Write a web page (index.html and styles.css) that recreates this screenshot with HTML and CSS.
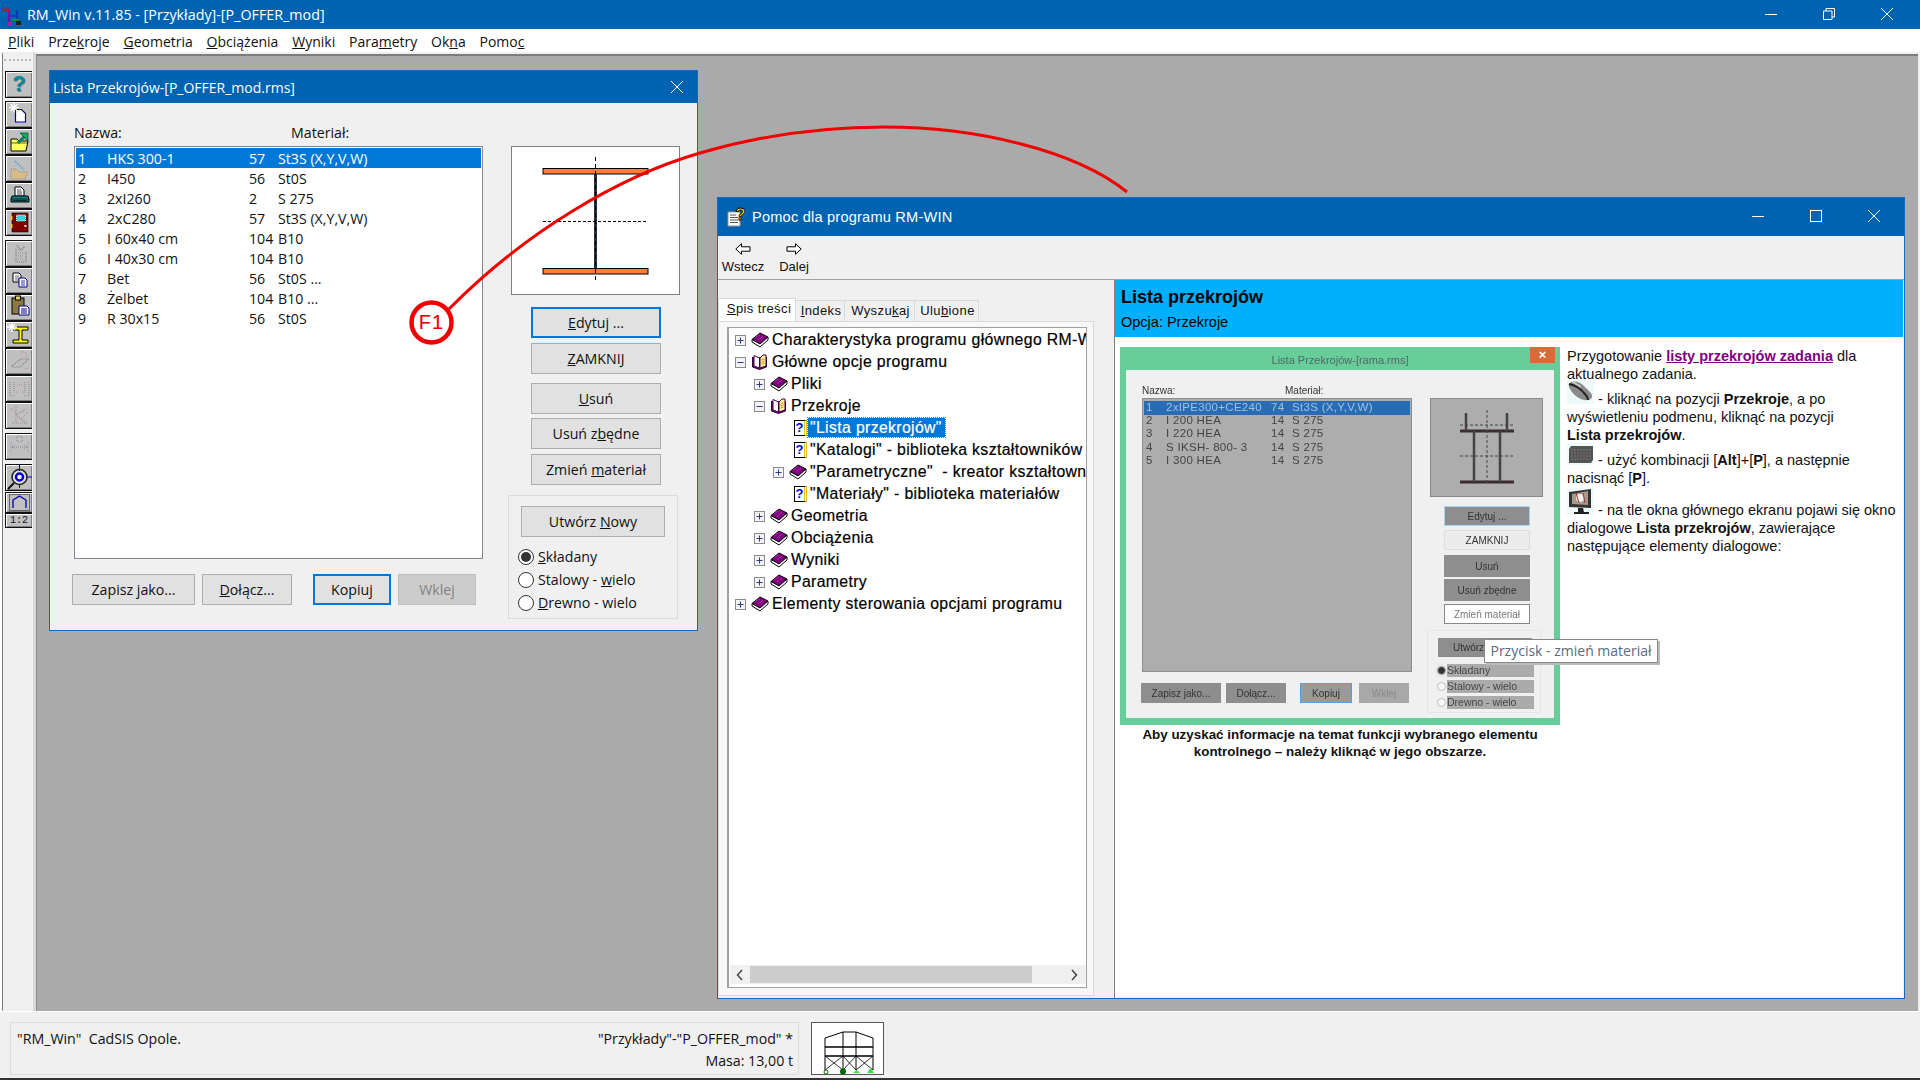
FILE: index.html
```html
<!DOCTYPE html>
<html lang="pl">
<head>
<meta charset="utf-8">
<title>RM_Win</title>
<link rel="stylesheet" href="styles.css">
</head>
<body>
<svg class="sprite" width="0" height="0">
  <symbol id="book" viewBox="0 0 18 16"><path d="M1 7.5 9 1l8 4-8 7z" fill="#800080" stroke="#000" stroke-linejoin="round"/><path d="M1 7.5V10l8 5 8-7V5l-8 7z" fill="#fff" stroke="#000" stroke-linejoin="round"/><path d="M4 6 9 2.5M7 8l5-4" stroke="#b040b0" stroke-width=".8"/></symbol>
  <symbol id="open" viewBox="0 0 18 16"><path d="M1.5 3v10l7 2.5 7-2.5V3" fill="#800080" stroke="#300030"/><path d="M3 1.5 8.5 4v10L3 12z" fill="#fff" stroke="#400040"/><path d="M15 1h-3L9 4v10l6-2z" fill="#fff3a0" stroke="#400040"/><path d="M10.500 6l3-1M10.500 8l3-1M10.500 10l3-1" stroke="#b08000" stroke-width=".8"/></symbol>
  <symbol id="plus" viewBox="0 0 11 11"><rect x=".5" y=".5" width="10" height="10" fill="#f3f3f6" stroke="#8c8c8c"/><path d="M2.500 5.500h6M5.500 2.500v6" stroke="#2a3a8c"/></symbol>
  <symbol id="minus" viewBox="0 0 11 11"><rect x=".5" y=".5" width="10" height="10" fill="#f3f3f6" stroke="#8c8c8c"/><path d="M2.500 5.500h6" stroke="#2a3a8c"/></symbol>
</svg>

<header class="titlebar">
  <svg class="app-icon" viewBox="0 0 22 20" width="22" height="20"><path d="M3 3 8 5M8 5 6 1M8 5 1 3" stroke="#d01010" stroke-width="1.500" fill="none"/><path d="M8 5v12" stroke="#8000a0" stroke-width="2"/><path d="M16 4v13M8 10h9" stroke="#1030c0" stroke-width="1.500"/><path d="M11 14h7" stroke="#109030" stroke-width="2"/><rect x="15" y="15" width="5" height="4" fill="#202020"/><rect x="7" y="16" width="3" height="3" fill="#d010a0"/></svg>
  <span class="title-text">RM_Win v.11.85 - [Przykłady]-[P_OFFER_mod]</span>
  <div class="win-controls main-controls">
    <svg viewBox="0 0 12 12" width="12" height="12"><path d="M0 6.500h12" stroke="#fff"/></svg>
    <svg viewBox="0 0 12 12" width="12" height="12"><path d="M.5 3h8.500v8.500H.5zM3 3V.5h8.500V9H9" fill="none" stroke="#fff"/></svg>
    <svg viewBox="0 0 12 12" width="12" height="12"><path d="M0 0l12 12M12 0 0 12" stroke="#fff"/></svg>
  </div>
</header>

<nav class="menubar">
  <span><u>P</u>liki</span><span>Prze<u>k</u>roje</span><span><u>G</u>eometria</span><span><u>O</u>bciążenia</span><span><u>W</u>yniki</span><span>Para<u>m</u>etry</span><span>Ok<u>n</u>a</span><span>Pomo<u>c</u></span>
</nav>

<main class="workspace">
  <aside class="toolbar">
    <div class="tb-grip"></div>
    <div class="tb-group tb-first">
      <div class="tb-btn tb-help">?</div>
    </div>
    <div class="tb-group">
      <div class="tb-btn"><svg viewBox="0 0 27 27" width="27" height="27"><path d="M9.500 8.500h6l4 4v8.500h-10z" fill="#fff" stroke="#0000a0" stroke-width="1.200"/><path d="M8 1.500v10M3 6.500h10M4.500 3l7 7M11.500 3l-7 7" stroke="#fff" stroke-width="1.300"/></svg></div>
      <div class="tb-btn"><svg viewBox="0 0 27 27" width="27" height="27"><path d="M5 11h6l2 2h9l-2 10H5z" fill="#ffff60" stroke="#000"/><path d="M5 15h17" stroke="#000" stroke-width=".6"/><path d="M12 15l7-7" stroke="#008060" stroke-width="3"/><path d="M14 5h8v8z" fill="#10b060" stroke="#004030" stroke-width=".7"/></svg></div>
      <div class="tb-btn"><svg viewBox="0 0 27 27" width="27" height="27"><path d="M5 14h5l3 3h9l-3 7H5z" fill="#d8bc88" stroke="#888" stroke-dasharray="1 1"/><path d="M9 6l9 9" stroke="#70a8c8" stroke-width="2" stroke-dasharray="2 1"/></svg></div>
      <div class="tb-btn"><svg viewBox="0 0 27 27" width="27" height="27"><path d="M9 5h6l3 3v6H9z" fill="#fff" stroke="#000"/><path d="M11 8h4M11 10h5M11 12h5" stroke="#000" stroke-width=".7"/><path d="M6 14h16l1 3v3H5v-3z" fill="#108080" stroke="#000"/><path d="M5 17h18M7 18.500h14" stroke="#000" stroke-width=".7"/></svg></div>
      <div class="tb-btn"><svg viewBox="0 0 27 27" width="27" height="27"><rect x="6" y="4" width="16" height="19" fill="#800000" stroke="#000" stroke-width=".6"/><rect x="10.500" y="6" width="9" height="6" fill="#40d0e0" stroke="#e0ffff" stroke-dasharray="1 1"/><rect x="4.500" y="7" width="2" height="4" fill="#e8c820"/><rect x="4.500" y="15" width="2" height="4" fill="#e8c820"/><rect x="18.500" y="16" width="2" height="2" fill="#eee"/></svg></div>
    </div>
    <div class="tb-group">
      <div class="tb-btn"><svg viewBox="0 0 27 27" width="27" height="27"><path d="M11 5l3 5 5-3M10 9v13h10V11" fill="none" stroke="#777" stroke-dasharray="1 1" stroke-width="1.200"/><path d="M12 13h6M12 16h6M12 19h6" stroke="#888" stroke-dasharray="1 1"/><path d="M18 6l-3 5" stroke="#c08080" stroke-dasharray="1 1"/></svg></div>
      <div class="tb-btn"><svg viewBox="0 0 27 27" width="27" height="27"><path d="M7 6h6l2 2v7H7z" fill="#fff" stroke="#000"/><path d="M9 9h4M9 11h4M9 13h4" stroke="#000" stroke-width=".6"/><path d="M13 11h6l2 2v7h-8z" fill="#fff" stroke="#000080"/><path d="M15 14h4M15 16h4M15 18h4" stroke="#000080" stroke-width=".8"/></svg></div>
      <div class="tb-btn"><svg viewBox="0 0 27 27" width="27" height="27"><rect x="6" y="4" width="12" height="16" fill="#8a7a40" stroke="#000"/><rect x="9.500" y="2" width="5" height="4" fill="#e8d060" stroke="#000"/><path d="M13 12h8l2 2v7H13z" fill="#fff" stroke="#000080"/><path d="M15 15h6M15 17h6M15 19h6" stroke="#000080"/></svg></div>
      <div class="tb-btn"><svg viewBox="0 0 27 27" width="27" height="27"><path d="M7 6h15v3h-6v10h6v3H7v-3h6V9H7z" fill="#ffff00" stroke="#000"/><path d="M6 1v10M1 6h10M3 3l6 6M9 3 3 9" stroke="#fff" stroke-width="1.300"/></svg></div>
      <div class="tb-btn"><svg viewBox="0 0 27 27" width="27" height="27"><path d="M6 18l9-7h8l-9 8H6z" fill="none" stroke="#808080" stroke-dasharray="1 1" stroke-width="1.200"/><path d="M15 4h3M20 8l1 1M22 20l-3 1M19 4l2 3" stroke="#c08080" stroke-dasharray="1 1"/></svg></div>
      <div class="tb-btn"><svg viewBox="0 0 27 27" width="27" height="27"><path d="M4 7v14h6M23 7v14h-6M8 7v10h3M19 7v10h-3" fill="none" stroke="#909090" stroke-dasharray="1 1" stroke-width="1.200"/><path d="M11 10h5" stroke="#c08888" stroke-dasharray="1 1"/></svg></div>
      <div class="tb-btn"><svg viewBox="0 0 27 27" width="27" height="27"><path d="M10 5v16h11M6 21h5M10 13l10-6M10 13l10 8" fill="none" stroke="#909090" stroke-dasharray="1 1" stroke-width="1.200"/><path d="M5 6l5 5M14 18l8-8" stroke="#c08080" stroke-dasharray="1 1"/></svg></div>
    </div>
    <div class="tb-group">
      <div class="tb-btn"><svg viewBox="0 0 27 27" width="27" height="27"><path d="M5 8v12M22 8v12" stroke="#9090c0" stroke-dasharray="1 1"/><path d="M6 14h15M6 14l3-2M6 14l3 2M21 14l-3-2M21 14l-3 2" stroke="#888" stroke-dasharray="1 1" fill="none"/><path d="M10 5l3-2M17 5l-3-2M10 7l3 2M17 7l-3 2" stroke="#888" fill="none" stroke-width=".8"/></svg></div>
    </div>
    <div class="tb-group">
      <div class="tb-btn"><svg viewBox="0 0 27 27" width="27" height="27"><circle cx="13.500" cy="13" r="7.500" fill="#e0e0e0" stroke="#222" stroke-width="1.600"/><circle cx="13.500" cy="13" r="3.500" fill="#fff" stroke="#0000e0" stroke-width="2.500"/><path d="M13.500 1v6M13.500 20v4M21 13h5" stroke="#0000c0"/><path d="M8 19l-6 6" stroke="#111" stroke-width="2"/></svg></div>
    </div>
    <div class="tb-group tb-tight">
      <div class="tb-btn tb-mid"><svg viewBox="0 0 27 20" width="27" height="20"><rect x="3.500" y="1.500" width="20" height="16" fill="none" stroke="#666"/><path d="M7 15V7l6.500-4L20 7v8" fill="none" stroke="#0000a0" stroke-width="1.300"/></svg></div>
      <div class="tb-btn tb-small">1:2</div>
    </div>
  </aside>

  <div class="desk"></div>

  <section class="window dialog">
    <div class="win-title"><span>Lista Przekrojów-[P_OFFER_mod.rms]</span>
      <svg class="dlg-close" viewBox="0 0 12 12" width="12" height="12"><path d="M0 0l12 12M12 0 0 12" stroke="#fff"/></svg>
    </div>
    <div class="dlg-body">
      <div class="dlg-left">
        <div class="dlg-labels"><span>Nazwa:</span><span>Materiał:</span></div>
        <div class="listbox">
          <div class="row sel"><span>1</span><span>HKS 300-1</span><span>57</span><span>St3S (X,Y,V,W)</span></div>
          <div class="row"><span>2</span><span>I450</span><span>56</span><span>St0S</span></div>
          <div class="row"><span>3</span><span>2xI260</span><span>2</span><span>S 275</span></div>
          <div class="row"><span>4</span><span>2xC280</span><span>57</span><span>St3S (X,Y,V,W)</span></div>
          <div class="row"><span>5</span><span>I 60x40 cm</span><span>104</span><span>B10</span></div>
          <div class="row"><span>6</span><span>I 40x30 cm</span><span>104</span><span>B10</span></div>
          <div class="row"><span>7</span><span>Bet</span><span>56</span><span>St0S ...</span></div>
          <div class="row"><span>8</span><span>Żelbet</span><span>104</span><span>B10 ...</span></div>
          <div class="row"><span>9</span><span>R 30x15</span><span>56</span><span>St0S</span></div>
        </div>
        <div class="dlg-bottom">
          <div class="btn b-save"><span>Zapisz <u>j</u>ako...</span></div>
          <div class="btn b-join"><span><u>D</u>ołącz...</span></div>
          <div class="btn btn-def b-copy">Kopiuj</div>
          <div class="btn btn-dis b-paste">Wklej</div>
        </div>
      </div>
      <div class="dlg-right">
        <svg class="preview" viewBox="0 0 169 149" width="169" height="149">
          <rect x=".5" y=".5" width="168" height="148" fill="#fff" stroke="#808080"/>
          <rect x="32" y="22.500" width="105" height="5.500" fill="#ff7d3c" stroke="#000"/>
          <rect x="32" y="122.500" width="105" height="5.500" fill="#ff7d3c" stroke="#000"/>
          <rect x="83" y="28" width="3" height="94" fill="#26303c"/>
          <path d="M84.500 11v123" stroke="#000" stroke-dasharray="4 3"/>
          <path d="M32 75.500h105" stroke="#000" stroke-dasharray="3 2"/>
        </svg>
        <div class="btn-stack">
          <div class="btn btn-def"><span><u>E</u>dytuj ...</span></div>
          <div class="btn"><span><u>Z</u>AMKNIJ</span></div>
          <div class="btn gap-big"><span><u>U</u>suń</span></div>
          <div class="btn gap-less"><span>Usuń z<u>b</u>ędne</span></div>
          <div class="btn"><span>Zmień <u>m</u>ateriał</span></div>
        </div>
        <div class="group">
          <div class="btn b-new"><span>Utwórz <u>N</u>owy</span></div>
          <div class="radio on"><i></i><span><u>S</u>kładany</span></div>
          <div class="radio"><i></i><span>Stalowy - <u>w</u>ielo</span></div>
          <div class="radio"><i></i><span><u>D</u>rewno - wielo</span></div>
        </div>
      </div>
    </div>
  </section>

  <section class="window help">
    <div class="win-title help-title">
      <svg class="help-icon" viewBox="0 0 20 20" width="20" height="20"><path d="M1 5h12v14H1z" fill="#fff" stroke="#999"/><path d="M3 8h6M3 10.500h8M3 13h8M3 15.500h8" stroke="#555"/><text x="13.500" y="13" text-anchor="middle" class="help-q">?</text></svg>
      <span>Pomoc dla programu RM-WIN</span>
      <div class="win-controls help-controls">
        <svg viewBox="0 0 12 12" width="12" height="12"><path d="M0 6.500h12" stroke="#fff"/></svg>
        <svg viewBox="0 0 12 12" width="12" height="12"><rect x=".5" y=".5" width="11" height="11" fill="none" stroke="#fff"/></svg>
        <svg viewBox="0 0 12 12" width="12" height="12"><path d="M0 0l12 12M12 0 0 12" stroke="#fff"/></svg>
      </div>
    </div>
    <div class="help-tools">
      <div class="tool t-back"><svg viewBox="0 0 16 12" width="16" height="12"><path d="M.8 6 6.500.8v3h8.500v4.400H6.500v3z" fill="#fff" stroke="#000"/></svg><span>Wstecz</span></div>
      <div class="tool t-next"><svg viewBox="0 0 16 12" width="16" height="12"><path d="M15.200 6 9.500.8v3H1v4.400h8.500v3z" fill="#fff" stroke="#000"/></svg><span>Dalej</span></div>
    </div>
    <div class="help-body">
      <div class="nav">
        <div class="tabs">
          <div class="tab active"><span><u>S</u>pis treści</span></div>
          <div class="tab t2"><span><u>I</u>ndeks</span></div>
          <div class="tab t3"><span>Wyszu<u>k</u>aj</span></div>
          <div class="tab t4"><span>Ulu<u>b</u>ione</span></div>
        </div>
        <div class="tab-panel">
          <div class="tree">
            <div class="tree-rows">
              <div class="node"><svg class="tg"><use href="#plus"/></svg><svg class="bk"><use href="#book"/></svg><span>Charakterystyka programu głównego RM-WIN</span></div>
              <div class="node"><svg class="tg"><use href="#minus"/></svg><svg class="bk"><use href="#open"/></svg><span>Główne opcje programu</span></div>
              <div class="node l1"><svg class="tg"><use href="#plus"/></svg><svg class="bk"><use href="#book"/></svg><span>Pliki</span></div>
              <div class="node l1"><svg class="tg"><use href="#minus"/></svg><svg class="bk"><use href="#open"/></svg><span>Przekroje</span></div>
              <div class="node l2 doc"><i class="hp">?</i><span class="cur">"Lista przekrojów"</span></div>
              <div class="node l2 doc"><i class="hp">?</i><span>"Katalogi" - biblioteka kształtowników</span></div>
              <div class="node l2"><svg class="tg"><use href="#plus"/></svg><svg class="bk"><use href="#book"/></svg><span>"Parametryczne"  - kreator kształtowników</span></div>
              <div class="node l2 doc"><i class="hp">?</i><span>"Materiały" - biblioteka materiałów</span></div>
              <div class="node l1"><svg class="tg"><use href="#plus"/></svg><svg class="bk"><use href="#book"/></svg><span>Geometria</span></div>
              <div class="node l1"><svg class="tg"><use href="#plus"/></svg><svg class="bk"><use href="#book"/></svg><span>Obciążenia</span></div>
              <div class="node l1"><svg class="tg"><use href="#plus"/></svg><svg class="bk"><use href="#book"/></svg><span>Wyniki</span></div>
              <div class="node l1"><svg class="tg"><use href="#plus"/></svg><svg class="bk"><use href="#book"/></svg><span>Parametry</span></div>
              <div class="node"><svg class="tg"><use href="#plus"/></svg><svg class="bk"><use href="#book"/></svg><span>Elementy sterowania opcjami programu</span></div>
            </div>
            <div class="hscroll">
              <svg viewBox="0 0 8 12" width="8" height="12"><path d="M6 1 1.500 6 6 11" fill="none" stroke="#444" stroke-width="1.500"/></svg>
              <div class="thumb"></div>
              <svg viewBox="0 0 8 12" width="8" height="12"><path d="M2 1l4.500 5L2 11" fill="none" stroke="#444" stroke-width="1.500"/></svg>
            </div>
          </div>
        </div>
      </div>
      <div class="splitter"></div>
      <article class="topic">
        <div class="topic-head">
          <h1>Lista przekrojów</h1>
          <p>Opcja: Przekroje</p>
        </div>
        <div class="topic-body">
          <figure class="fig">
            <div class="shot">
              <div class="shot-title"><span class="soft">Lista Przekrojów-[rama.rms]</span><span class="shot-x">×</span></div>
              <div class="shot-in">
                <div class="s-left">
                  <div class="s-labels"><span>Nazwa:</span><span>Materiał:</span></div>
                  <div class="s-list">
                    <div class="s-row s-sel"><span>1</span><span>2xIPE300+CE240</span><span>74</span><span>St3S (X,Y,V,W)</span></div>
                    <div class="s-row"><span>2</span><span>I 200 HEA</span><span>14</span><span>S 275</span></div>
                    <div class="s-row"><span>3</span><span>I 220 HEA</span><span>14</span><span>S 275</span></div>
                    <div class="s-row"><span>4</span><span>S IKSH- 800- 3</span><span>14</span><span>S 275</span></div>
                    <div class="s-row"><span>5</span><span>I 300 HEA</span><span>14</span><span>S 275</span></div>
                  </div>
                  <div class="s-bottom">
                    <div class="s-btn s1">Zapisz jako...</div>
                    <div class="s-btn s2">Dołącz...</div>
                    <div class="s-btn s3">Kopiuj</div>
                    <div class="s-btn s4">Wklej</div>
                  </div>
                </div>
                <div class="s-right">
                  <svg class="s-prev" viewBox="0 0 113 99" width="113" height="99">
                    <rect width="113" height="99" fill="#adadad"/>
                    <rect x=".5" y=".5" width="112" height="98" fill="none" stroke="#8a8a8a"/>
                    <path d="M30 33h54M30 84h54" stroke="#3c2b30" stroke-width="3"/>
                    <path d="M44 33v51M70 33v51M36 15v18M77 15v18" stroke="#444" stroke-width="2.500"/>
                    <path d="M30 58h54M57 12v74M30 27h54" stroke="#444" stroke-dasharray="3 2"/>
                  </svg>
                  <div class="s-stack">
                    <div class="s-btn sb1">Edytuj ...</div>
                    <div class="s-btn sb2">ZAMKNIJ</div>
                    <div class="s-btn sb3">Usuń</div>
                    <div class="s-btn sb4">Usuń zbędne</div>
                    <div class="s-btn sb5">Zmień materiał</div>
                  </div>
                  <div class="s-group">
                    <div class="s-btn sb6">Utwórz Nowy</div>
                    <div class="s-radio s-on"><i></i><span>Składany</span></div>
                    <div class="s-radio"><i></i><span>Stalowy - wielo</span></div>
                    <div class="s-radio"><i></i><span>Drewno - wielo</span></div>
                  </div>
                </div>
              </div>
              <div class="tooltip">Przycisk - zmień materiał</div>
            </div>
            <figcaption>Aby uzyskać informacje na temat funkcji wybranego elementu<br>kontrolnego – należy kliknąć w jego obszarze.</figcaption>
          </figure>
          <div class="topic-text">
            <p>Przygotowanie <a>listy przekrojów zadania</a> dla<br>aktualnego zadania.</p>
            <p class="p2"><svg class="pic" viewBox="0 0 27 24" width="27" height="24"><rect width="27" height="24" fill="#eefafa"/><path d="M2 4c4-4 10-3 16 3l6 6c2 3 1 7-3 7-6 1-12-3-16-8C3 9 1 6 2 4z" fill="#8a8a8a"/><path d="M2 4c5 1 11 4 15 9 2 2 4 5 4 7" stroke="#222" stroke-width="2" fill="none"/><path d="M6 2l8 5" stroke="#ccc" stroke-width="1.500"/></svg> - kliknąć na pozycji <b>Przekroje</b>, a po<br>wyświetleniu podmenu, kliknąć na pozycji<br><b>Lista przekrojów</b>.</p>
            <p class="p3"><svg class="pic" viewBox="0 0 27 22" width="27" height="22"><rect width="27" height="22" fill="#eefafa"/><path d="M2 6 4 3h22v14l-2 3H2z" fill="#555"/><path d="M4 7h20M4 10h20M4 13h20M4 16h20" stroke="#777" stroke-dasharray="2 1"/></svg> - użyć kombinacji [<b>Alt</b>]+[<b>P</b>], a następnie<br>nacisnąć [<b>P</b>].</p>
            <p class="p4"><svg class="pic" viewBox="0 0 27 27" width="27" height="27"><rect width="27" height="27" fill="#eefafa"/><path d="M2 4l22-3v19l-22-1z" fill="#333"/><path d="M5 6l16-3v14l-16-1z" fill="#a89a88"/><circle cx="13" cy="10" r="4" fill="#eee"/><path d="M9 5l3 10M16 5l2 10" stroke="#a03030"/><path d="M11 20h5l1 4h5v2H7v-2h4z" fill="#222"/></svg> - na tle okna głównego ekranu pojawi się okno<br>dialogowe <b>Lista przekrojów</b>, zawierające<br>następujące elementy dialogowe:</p>
          </div>
        </div>
      </article>
    </div>
  </section>
</main>

<footer class="statusbar">
  <div class="status-panel">
    <span>"RM_Win"  CadSIS Opole.</span>
    <div class="status-right"><span>"Przykłady"-"P_OFFER_mod" *</span><span>Masa: 13,00 t</span></div>
  </div>
  <div class="thumb-box">
    <svg viewBox="0 0 72 54" width="72" height="54">
      <path d="M13 47V15L31 9h13l17 6v32M31 9v38M44 9v38" fill="none" stroke="#000" stroke-width="1"/>
      <path d="M13 24h48M13 33h48" stroke="#000" stroke-width="1.500"/>
      <path d="M13 33l18 14M31 33 13 47M31 33l13 14M44 33 31 47M44 33l17 14M61 33 44 47" stroke="#000" stroke-width=".8"/>
      <circle cx="14" cy="49" r="2" fill="#fff" stroke="#060"/><circle cx="31" cy="48.500" r="3" fill="#060"/><path d="M41 50h7l-3.500-3z" fill="#30e030"/><path d="M55 50h7l-3.500-5z" fill="#30e030"/>
    </svg>
  </div>
</footer>

<svg class="callout" viewBox="0 0 1920 1080" width="1920" height="1080">
  <path d="M449 309C525 232 620 176 700 153 765 134 830 127 885 127 975 127 1075 150 1127 192" fill="none" stroke="#f00000" stroke-width="3"/>
  <circle cx="431.500" cy="322.500" r="20" fill="#fff" stroke="#f00000" stroke-width="4.500"/>
  <text x="431.500" y="329" text-anchor="middle" class="f1">F1</text>
</svg>
</body>
</html>
```

FILE: styles.css
```css
* { box-sizing: border-box; }
html, body { margin: 0; height: 100%; }
body {
  width: 1920px; height: 1080px; overflow: hidden; position: relative;
  display: flex; flex-direction: column;
  font-family: "Open Sans", "Liberation Sans", sans-serif;
  font-size: 14.200px; color: #111; background: #f0f0f0;
}
p, h1, figure { margin: 0; }
.sprite { position: absolute; }

.titlebar { height: 29px; flex: none; background: #0063b1; color: #fff; display: flex; align-items: center; position: relative; }
.app-icon { margin: 2px 0 0 1px; }
.title-text { margin-left: 4px; font-size: 14.300px; }
.win-controls { display: flex; gap: 46px; }
.main-controls { position: absolute; left: 1765px; top: 8px; }

.menubar { height: 24px; flex: none; background: #fff; display: flex; align-items: center; padding: 1px 0 0 8px; gap: 13.800px; font-size: 14px; border-bottom: 1px solid #eee; }

.workspace { flex: 1; min-height: 0; display: flex; position: relative; }
.toolbar { width: 36px; flex: none; background: #f0f0f0; border-left: 2px solid #fff; position: relative; display: flex; flex-direction: column; padding-top: 18px; padding-left: 3px; border-right: 3px solid #d8d8d8; box-shadow: inset 1px 0 #7a7a7a; }
.tb-grip { position: absolute; left: 2px; right: 2px; top: 6px; height: 0; border-top: 2px dotted #bbb; }
.tb-group { display: flex; flex-direction: column; margin-bottom: 4px; width: 27px; }
.tb-first { margin-bottom: 3px; }
.tb-btn {
  height: 27px; width: 27px; flex: none; background: #c0c0c0;
  border: 1px solid #111; border-right: 0;
  box-shadow: inset 1px 1px #fff, inset -1px -1px #808080;
  display: flex; align-items: center; justify-content: center;
}
.tb-btn svg { display: block; flex: none; }
.tb-help { font: bold 22px/24px "Liberation Sans", sans-serif; color: #008b9b; text-shadow: 1px 1px 0 #30303080; padding-bottom: 2px; }
.tb-tight { margin-top: -3px; }
.tb-tight .tb-mid { height: 21px; }
.tb-small { height: 15px; font: 10px "Liberation Mono", monospace; letter-spacing: 0; }
.desk { flex: 1; background: #aaaaaa; border-top: 2px solid #7c7c7c; margin-top: 1px; margin-right: 2px; border-left: 1px solid #8c8c8c; }

.window { position: absolute; background: #f0f0f0; border: 1px solid #0f6cbd; display: flex; flex-direction: column; }
.win-title { background: #0063b1; color: #fff; flex: none; display: flex; align-items: center; position: relative; }

.dialog { left: 49px; top: 17px; width: 649px; height: 561px; }
.dialog .win-title { height: 32px; padding-left: 3px; font-size: 14px; }
.dlg-close { position: absolute; left: 621px; top: 10px; }
.dlg-body { flex: 1; display: flex; padding-left: 24px; gap: 25px; }
.dlg-left { width: 409px; }
.dlg-labels { height: 43px; padding-top: 20px; display: flex; line-height: 20px; }
.dlg-labels span:first-child { width: 217px; }
.listbox { height: 413px; background: #fff; border: 1px solid #82878f; padding: 1px; }
.row { height: 20px; line-height: 21px; display: grid; grid-template-columns: 29px 142px 29px 1fr; padding-left: 2px; white-space: nowrap; }
.row.sel { background: #0078d7; color: #fff; }
.dlg-bottom { display: flex; margin: 15px 0 0 -2px; }
.btn { height: 31px; background: #e1e1e1; border: 1px solid #adadad; display: flex; align-items: center; justify-content: center; white-space: nowrap; }
.btn-def { border: 2px solid #0078d7; }
.btn-dis { background: #cccccc; color: #838383; border-color: #bfbfbf; }
.b-save { width: 123px; margin-right: 7px; }
.b-join { width: 90px; margin-right: 21px; }
.b-copy { width: 78px; margin-right: 7px; }
.b-paste { width: 78px; }
.dlg-right { width: 172px; display: flex; flex-direction: column; padding-top: 43px; }
.preview { margin-left: 3px; display: block; flex: none; }
.btn-stack { width: 130px; margin: 12px 0 0 23px; display: flex; flex-direction: column; gap: 5px; }
.btn-stack .gap-big { margin-top: 4px; }
.btn-stack .gap-less { margin-top: -1px; }
.group { width: 170px; height: 124px; margin-top: 10px; border: 1px solid #dcdcdc; padding: 10px 0 0 9px; }
.b-new { width: 144px; margin-left: 3px; margin-bottom: 8px; }
.radio { height: 23px; display: flex; align-items: center; gap: 4px; }
.radio i { width: 16px; height: 16px; border-radius: 50%; border: 1px solid #333; background: #fff; flex: none; display: flex; align-items: center; justify-content: center; }
.radio.on i::after { content: ""; width: 10px; height: 10px; border-radius: 50%; background: #333; }

.help { left: 717px; top: 144px; width: 1188px; height: 802px; }
.help-title { height: 38px; padding-left: 9px; font: 14.600px "Liberation Sans", sans-serif; letter-spacing: .2px; }
.help-icon { margin-right: 5px; }
.help-q { font: bold 17px "Liberation Sans", sans-serif; fill: #ffe000; stroke: #000; stroke-width: .8px; letter-spacing: 0; }
.help-controls { position: absolute; left: 1034px; top: 12px; }
.help-tools { height: 44px; flex: none; border-bottom: 1px solid #a0a0a0; display: flex; padding-left: 3px; font: 13px "Liberation Sans", sans-serif; }
.tool { display: flex; flex-direction: column; align-items: center; padding-top: 7px; gap: 4px; }
.t-back { width: 44px; }
.t-next { margin-left: 13px; width: 32px; }
.tool svg { display: block; }
.help-body { flex: 1; min-height: 0; display: flex; }
.nav { width: 376px; flex: none; padding-top: 18px; font: 13px "Liberation Sans", sans-serif; letter-spacing: .4px; display: flex; flex-direction: column; }
.tabs { display: flex; align-items: flex-end; height: 23px; position: relative; z-index: 1; }
.tab { height: 21px; background: #f0f0f0; border: 1px solid #d9d9d9; border-bottom: 0; border-left: 0; display: flex; align-items: center; justify-content: center; padding: 0 0 2px 2px; }
.tab.active { width: 78px; height: 23px; background: #fff; border-left: 1px solid #d9d9d9; padding: 0 0 4px 4px; }
.t2 { width: 49px; } .t3 { width: 70px; } .t4 { width: 64px; }
.tab-panel { flex: 1; margin-bottom: 2px; background: #f7f7f7; border: 1px solid #d9d9d9; padding: 5px 6px 7px 8px; }
.tree { height: 100%; background: #fff; border: 1px solid #a0a0a0; padding: 1px 0 2px 1px; display: flex; flex-direction: column; border-left-width: 2px; }
.tree-rows { flex: 1; padding: 0 2px 0 5px; overflow: hidden; font: 15.800px "Liberation Sans", sans-serif; letter-spacing: .36px; -webkit-text-stroke: .2px #000; color: #000; }
.node { height: 22px; display: flex; align-items: center; white-space: pre; }
.node.l1 { padding-left: 19px; }
.node.l2 { padding-left: 38px; }
.node.doc { padding-left: 59px; }
.tg { width: 11px; height: 11px; flex: none; margin-right: 5px; }
.bk { width: 18px; height: 16px; flex: none; margin-right: 3px; }
.hp { width: 13px; height: 16px; flex: none; margin-right: 3px; background: #fff; border: 1px solid #000; border-right: 3px double #e0c020; font: bold 13px/14px "Liberation Sans", sans-serif; color: #0000e0; text-align: center; -webkit-text-stroke: 0; letter-spacing: 0; }
.cur { background: #0078d7; color: #fff; -webkit-text-stroke: .2px #fff; outline: 1px dotted #b06000; padding: 0 3px 0 2px; margin: -2px 0 0 -2px; line-height: 19px; height: 19px; }
.hscroll { height: 19px; flex: none; margin-bottom: 1px; display: flex; align-items: center; background: #f0f0f0; padding: 0 8px 0 6px; gap: 6px; justify-content: space-between; }
.thumb { width: 282px; height: 17px; background: #cdcdcd; margin-right: auto; }
.splitter { width: 21px; flex: none; background: #f0f0f0; border-right: 1px solid #808080; }
.topic { flex: 1; min-width: 0; background: #fff; font: 14.500px/18px "Liberation Sans", sans-serif; color: #111; margin-right: 1px; margin-bottom: 1px; }
.topic-head { height: 57px; background: #00b0ff; padding: 6px 6px 0; color: #000; }
.topic-head h1 { font: bold 18px/22px "Liberation Sans", sans-serif; }
.topic-head p { font-size: 14.500px; line-height: 17px; margin-top: 6px; }
.topic-body { display: flex; padding: 10px 0 0 5px; gap: 7px; }
.fig { width: 440px; flex: none; }
.fig figcaption { text-align: center; font: bold 13.400px/17px "Liberation Sans", sans-serif; padding-top: 1px; }
.topic-text { flex: 1; }
.topic-text a { color: #800080; font-weight: bold; text-decoration: underline; }
.p2 { margin-top: -3px; }
.p3 { margin-top: -1px; }
.p4 { margin-top: 1px; }
.pic { vertical-align: baseline; }

.shot { position: relative; width: 440px; height: 378px; background: #67cd99; padding: 0 6px 7px; display: flex; flex-direction: column; font: 10px "Liberation Sans", sans-serif; color: #333; }
.shot-title { height: 23px; line-height: 27px; flex: none; text-align: center; color: #566; font-size: 11px; position: relative; }
.soft { filter: blur(.35px); }
.shot-x { position: absolute; right: -1px; top: 0; width: 25px; height: 16px; background: #d86c38; color: #fff; font: bold 13px/16px "Liberation Sans", sans-serif; }
.shot-in { flex: 1; background: #f0f0f0; display: flex; padding-left: 16px; gap: 18px; filter: blur(.35px); }
.s-left { width: 270px; }
.s-labels { height: 28px; padding-top: 14px; display: flex; line-height: 14px; }
.s-labels span:first-child { width: 143px; }
.s-list { height: 274px; background: #adadad; border: 1px solid #8d8d8d; padding: 2px 1px; }
.s-row { height: 13.300px; line-height: 13px; display: grid; grid-template-columns: 20px 105px 21px 1fr; padding-left: 2px; white-space: nowrap; font-size: 11.500px; letter-spacing: .3px; color: #444; }
.s-sel { background: #2a6cb4; color: #9fc0e0; height: 14px; margin-bottom: -1px; }
.s-bottom { display: flex; margin: 11px 0 0 -1px; }
.s-btn { height: 20px; display: flex; align-items: center; justify-content: center; background: #8e8e8e; white-space: nowrap; color: #333; font-size: 10px; }
.s1 { width: 80px; margin-right: 5px; } .s2 { width: 60px; margin-right: 14px; }
.s3 { width: 52px; margin-right: 7px; background: #9a9a9a; border: 1px solid #5a9ae0; } .s4 { width: 50px; background: #a8a8a8; color: #888; }
.s-right { width: 114px; display: flex; flex-direction: column; padding-top: 28px; }
.s-prev { display: block; flex: none; }
.s-stack { width: 86px; margin: 9px 0 0 14px; display: flex; flex-direction: column; }
.sb1 { border: 1px solid #a0d8f0; }
.sb2 { background: #ececec; margin-top: 4px; border: 1px solid #ddd; }
.sb3 { height: 22px; margin-top: 5px; }
.sb4 { height: 22px; margin-top: 2px; }
.sb5 { background: #fff; color: #777; border: 1px solid #888; margin-top: 3px; }
.s-group { width: 114px; height: 83px; margin: 6px 0 0 -3px; border: 1px solid #e6e6e6; padding: 7px 0 0 9px; }
.sb6 { width: 94px; margin: 0 0 5px 1px; height: 19px; justify-content: flex-start; padding-left: 15px; }
.s-radio { height: 16px; display: flex; align-items: center; gap: 1px; color: #444; font-size: 10.500px; }
.s-radio i { width: 9px; height: 9px; border-radius: 50%; background: #f8f8f8; border: 1px solid #bbb; flex: none; }
.s-on i { background: #333; box-shadow: 0 0 0 2px #e8e8e8; }
.s-radio span { background: #ababab; width: 87px; height: 13px; line-height: 13px; }
.tooltip { position: absolute; left: 364px; top: 292px; width: 174px; height: 24px; background: #fff; border: 1px solid #888; box-shadow: 2px 2px 0 #bbb; color: #5a6a80; font: 14px/22px "Open Sans", sans-serif; text-align: center; white-space: nowrap; }

.statusbar { height: 69px; flex: none; background: #f0f0f0; display: flex; padding: 10px 0 3px 10px; gap: 12px; border-bottom: 2px solid #333; border-top: 1px solid #fff; }
.status-panel { width: 789px; border: 1px solid #dcdcdc; display: flex; justify-content: space-between; padding: 6px 5px 2px 6px; white-space: pre; }
.status-right { display: flex; flex-direction: column; align-items: flex-end; gap: 3px; line-height: 19px; }
.status-panel > span { line-height: 19px; }
.thumb-box { width: 73px; background: #fff; border: 1px solid #555; }
.thumb-box svg { display: block; }

.callout { position: absolute; left: 0; top: 0; pointer-events: none; }
.f1 { font: 20px "Liberation Sans", sans-serif; fill: #e80000; stroke: #e80000; stroke-width: .15px; letter-spacing: 1px; }
```
